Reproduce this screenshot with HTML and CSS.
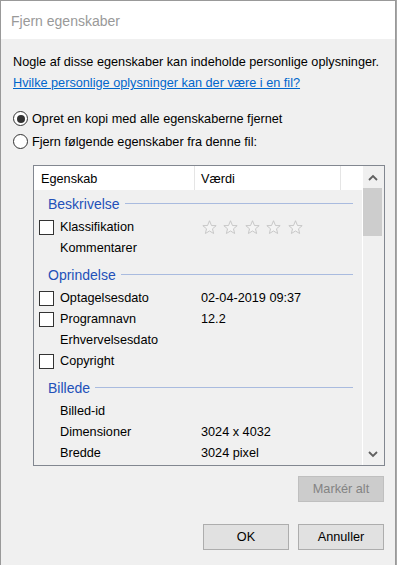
FILE: index.html
```html
<!DOCTYPE html>
<html lang="da">
<head>
<meta charset="utf-8">
<title>Fjern egenskaber</title>
<link rel="stylesheet" href="styles.css">
</head>
<body>
<div class="window">
  <div class="titlebar"><span class="title">Fjern egenskaber</span></div>
  <div class="content">
    <p class="intro">Nogle af disse egenskaber kan indeholde personlige oplysninger.</p>
    <p class="linkline"><a class="link" href="#">Hvilke personlige oplysninger kan der være i en fil?</a></p>
    <div class="options">
      <div class="radio-row"><span class="radio checked"><span class="dot"></span></span><span>Opret en kopi med alle egenskaberne fjernet</span></div>
      <div class="radio-row"><span class="radio"></span><span>Fjern følgende egenskaber fra denne fil:</span></div>
    </div>
    <div class="listbox">
      <div class="list-main">
        <div class="list-header">
          <div class="hcol hname">Egenskab</div>
          <div class="hcol hvalue">Værdi</div>
          <div class="hcol hrest"></div>
        </div>
        <div class="list-body">
          <div class="group first"><span class="group-title">Beskrivelse</span><span class="group-line"></span></div>
          <div class="item"><span class="name"><span class="check"></span>Klassifikation</span>
            <span class="value stars">
              <svg class="star" viewBox="0 0 16 16" width="15" height="15"><path d="M8 0.8 L10.1 5.9 L15.1 6 L11.2 9.4 L12.4 14.4 L8 11.7 L3.6 14.4 L4.8 9.4 L0.9 6 L5.9 5.9 Z"/></svg>
              <svg class="star" viewBox="0 0 16 16" width="15" height="15"><path d="M8 0.8 L10.1 5.9 L15.1 6 L11.2 9.4 L12.4 14.4 L8 11.7 L3.6 14.4 L4.8 9.4 L0.9 6 L5.9 5.9 Z"/></svg>
              <svg class="star" viewBox="0 0 16 16" width="15" height="15"><path d="M8 0.8 L10.1 5.9 L15.1 6 L11.2 9.4 L12.4 14.4 L8 11.7 L3.6 14.4 L4.8 9.4 L0.9 6 L5.9 5.9 Z"/></svg>
              <svg class="star" viewBox="0 0 16 16" width="15" height="15"><path d="M8 0.8 L10.1 5.9 L15.1 6 L11.2 9.4 L12.4 14.4 L8 11.7 L3.6 14.4 L4.8 9.4 L0.9 6 L5.9 5.9 Z"/></svg>
              <svg class="star" viewBox="0 0 16 16" width="15" height="15"><path d="M8 0.8 L10.1 5.9 L15.1 6 L11.2 9.4 L12.4 14.4 L8 11.7 L3.6 14.4 L4.8 9.4 L0.9 6 L5.9 5.9 Z"/></svg>
            </span>
          </div>
          <div class="item"><span class="name"><span class="nocheck"></span>Kommentarer</span><span class="value"></span></div>
          <div class="group"><span class="group-title">Oprindelse</span><span class="group-line"></span></div>
          <div class="item"><span class="name"><span class="check"></span>Optagelsesdato</span><span class="value">02-04-2019 09:37</span></div>
          <div class="item"><span class="name"><span class="check"></span>Programnavn</span><span class="value">12.2</span></div>
          <div class="item"><span class="name"><span class="nocheck"></span>Erhvervelsesdato</span><span class="value"></span></div>
          <div class="item"><span class="name"><span class="check"></span>Copyright</span><span class="value"></span></div>
          <div class="group"><span class="group-title">Billede</span><span class="group-line"></span></div>
          <div class="item"><span class="name"><span class="nocheck"></span>Billed-id</span><span class="value"></span></div>
          <div class="item"><span class="name"><span class="nocheck"></span>Dimensioner</span><span class="value">3024 x 4032</span></div>
          <div class="item"><span class="name"><span class="nocheck"></span>Bredde</span><span class="value">3024 pixel</span></div>
        </div>
      </div>
      <div class="scrollbar">
        <div class="sb-btn"><svg width="10" height="7" viewBox="0 0 10 7"><polyline points="1,6 5,2 9,6" /></svg></div>
        <div class="sb-thumb"></div>
        <div class="sb-track"></div>
        <div class="sb-btn"><svg width="10" height="7" viewBox="0 0 10 7"><polyline points="1,1 5,5 9,1" /></svg></div>
      </div>
    </div>
    <div class="btn-row select-row"><button class="btn" disabled>Markér alt</button></div>
    <div class="btn-row dialog-row"><button class="btn">OK</button><button class="btn">Annuller</button></div>
  </div>
</div>
</body>
</html>
```
FILE: styles.css
```css
* { box-sizing: border-box; }
html, body { margin: 0; padding: 0; }
body {
  background: #a8a8a8;
  font-family: "Liberation Sans", Arial, sans-serif;
  font-size: 12.7px;
  color: #000;
  width: 397px;
  height: 565px;
  overflow: hidden;
}
.window {
  width: 396px;
  height: 565px;
  border: 1px solid #999;
  border-bottom: none;
  background: #f0f0f0;
}
.titlebar {
  height: 38px;
  background: #fff;
  display: flex;
  align-items: center;
  padding: 2px 0 0 10px;
}
.title {
  font-size: 14px;
  color: #999;
}
.content {
  padding: 13px 10px 0 12px;
}
.intro, .linkline {
  margin: 0;
  line-height: 21px;
  white-space: nowrap;
}
.link {
  color: #0066cc;
  text-decoration: underline;
}
.options {
  margin-top: 13px;
}
.radio-row {
  height: 23px;
  display: flex;
  align-items: center;
  gap: 4px;
  white-space: nowrap;
}
.radio {
  width: 15px;
  height: 15px;
  border: 1px solid #333;
  border-radius: 50%;
  background: #fff;
  display: flex;
  align-items: center;
  justify-content: center;
  flex: none;
}
.radio .dot {
  width: 8px;
  height: 8px;
  border-radius: 50%;
  background: #333;
}
.listbox {
  margin-top: 12px;
  margin-left: 20px;
  width: 352px;
  height: 301px;
  border: 1px solid #828790;
  display: flex;
}
.list-main {
  width: 329px;
  display: flex;
  flex-direction: column;
}
.list-header {
  height: 24px;
  background: #fff;
  display: flex;
}
.hcol {
  padding-top: 3px;
  line-height: 21px;
  white-space: nowrap;
}
.hname {
  width: 161px;
  padding-left: 7px;
  border-right: 1px solid #e5e5e5;
}
.hvalue {
  width: 146px;
  padding-left: 6px;
  border-right: 1px solid #e5e5e5;
}
.hrest { width: 22px; }
.list-body {
  height: 275px;
  border-right: 1px solid #fff;
  overflow: hidden;
}
.group {
  display: flex;
  align-items: center;
  padding-top: 4px;
  height: 29px;
  line-height: 25px;
  padding-left: 14px;
  padding-right: 9px;
}
.group.first {
  padding-top: 2px;
  height: 27px;
}
.group-title {
  font-size: 14px;
  color: #2351b9;
  white-space: nowrap;
}
.group-line {
  flex: 1;
  height: 1px;
  background: #a9bbdf;
  margin-left: 5px;
  margin-top: -2px;
}
.item {
  height: 21px;
  line-height: 21px;
  display: flex;
  align-items: center;
  white-space: nowrap;
}
.name {
  width: 167px;
  padding-left: 5px;
  display: flex;
  align-items: center;
  gap: 6px;
}
.check, .nocheck {
  width: 15px;
  height: 15px;
  flex: none;
}
.check {
  border: 1px solid #333;
  background: #fff;
}
.value {
  flex: 1;
}
.stars {
  display: flex;
  align-items: center;
  gap: 6.4px;
  padding-left: 1px;
}
.star path {
  fill: #f4f4f4;
  stroke: #c4c4c4;
  stroke-width: 1;
  stroke-linejoin: round;
}
.scrollbar {
  width: 21px;
  background: #f0f0f0;
  display: flex;
  flex-direction: column;
}
.sb-btn {
  height: 22px;
  width: 19px;
  display: flex;
  align-items: center;
  justify-content: center;
}
.sb-btn polyline {
  fill: none;
  stroke: #606060;
  stroke-width: 1.8;
}
.sb-thumb {
  width: 19px;
  height: 48px;
  background: #cdcdcd;
}
.sb-track { flex: 1; }
.btn-row {
  display: flex;
  justify-content: flex-end;
  gap: 9px;
  padding-right: 1px;
}
.select-row { margin-top: 10px; }
.dialog-row { margin-top: 22px; }
.btn {
  width: 86px;
  height: 26px;
  font-family: "Liberation Sans", Arial, sans-serif;
  font-size: 12.7px;
  color: #000;
  background: #e1e1e1;
  border: 1px solid #adadad;
  padding: 0;
  margin: 0;
}
.btn:disabled {
  background: #cccccc;
  border-color: #bfbfbf;
  color: #838383;
}
```
